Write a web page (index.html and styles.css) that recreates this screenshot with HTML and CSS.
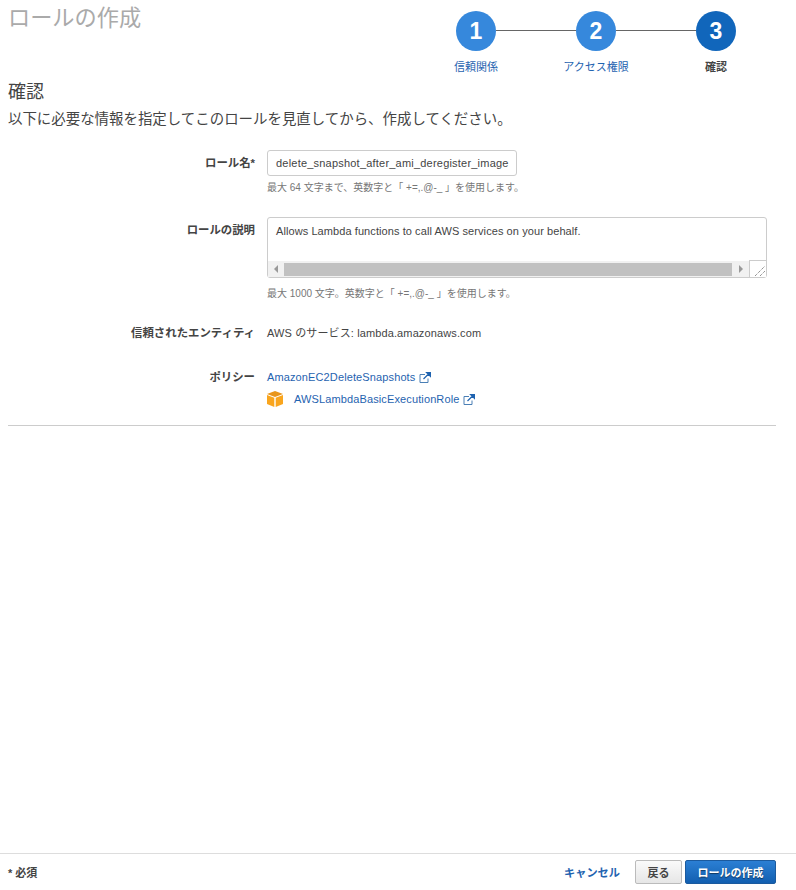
FILE: index.html
```html
<!DOCTYPE html>
<html lang="ja">
  <head>
    <meta charset="UTF-8" />
    <meta name="viewport" content="width=device-width, initial-scale=1.0" />
    <title>ロールの作成</title>
    <link rel="stylesheet" href="styles.css">
  </head>
  <body>
    <div class="page">
      <div class="top">
        <h1 class="title">ロールの作成</h1>
        <!-- ステップ -->
        <div class="steps">
          <div class="step">
            <div class="circle">1</div>
            <a class="step-label">信頼関係</a>
          </div>
          <div class="step">
            <div class="circle">2</div>
            <a class="step-label">アクセス権限</a>
          </div>
          <div class="step current">
            <div class="circle">3</div>
            <span class="step-label">確認</span>
          </div>
        </div>
      </div>

      <h2 class="heading">確認</h2>
      <p class="lead">以下に必要な情報を指定してこのロールを見直してから、作成してください。</p>

      <div class="form">
        <div class="row row-name">
          <div class="label">ロール名*</div>
          <div class="value">
            <div class="input">delete_snapshot_after_ami_deregister_image</div>
            <p class="hint">最大 64 文字まで、英数字と「 +=,.@-_ 」を使用します。</p>
          </div>
        </div>

        <div class="row row-desc">
          <div class="label">ロールの説明</div>
          <div class="value">
            <div class="textarea">
              <div class="textarea-text">Allows Lambda functions to call AWS services on your behalf.</div>
              <div class="scrollbar">
                <span class="arrow arrow-left"></span>
                <span class="thumb"></span>
                <span class="arrow arrow-right"></span>
                <span class="resizer">
                  <svg width="12" height="12" viewBox="0 0 12 12">
                    <path d="M1 11 L11 1 M6 11 L11 6" stroke="#666" stroke-width="1" stroke-dasharray="1 1" fill="none" />
                  </svg>
                </span>
              </div>
            </div>
            <p class="hint">最大 1000 文字。英数字と「 +=,.@-_ 」を使用します。</p>
          </div>
        </div>

        <div class="row row-entity">
          <div class="label">信頼されたエンティティ</div>
          <div class="value">AWS のサービス: lambda.amazonaws.com</div>
        </div>

        <div class="row row-policy">
          <div class="label">ポリシー</div>
          <div class="value">
            <div class="policy">
              <a class="link">AmazonEC2DeleteSnapshots</a>
              <svg class="ext" width="12" height="11" viewBox="0 0 12 11">
                <path d="M6 2.5 H1 V10.5 H9 V6.5" stroke="#4a7fb5" stroke-width="1" fill="none" />
                <path d="M4.5 7 L9.5 2 M7.5 0.5 H11.5 V4.5 Z" stroke="#1f63b0" stroke-width="1.2" fill="#1f63b0" />
              </svg>
            </div>
            <div class="policy policy-aws">
              <svg class="cube" width="16" height="16" viewBox="0 0 16 16">
                <path d="M8 0 L16 3 L8 6 L0 3 Z" fill="#e8951a" />
                <path d="M0 4 L7.3 6.8 V16 L0 13 Z" fill="#f9a51e" />
                <path d="M16 4 L8.7 6.8 V16 L16 13 Z" fill="#f9a51e" />
              </svg>
              <a class="link">AWSLambdaBasicExecutionRole</a>
              <svg class="ext" width="12" height="11" viewBox="0 0 12 11">
                <path d="M6 2.5 H1 V10.5 H9 V6.5" stroke="#4a7fb5" stroke-width="1" fill="none" />
                <path d="M4.5 7 L9.5 2 M7.5 0.5 H11.5 V4.5 Z" stroke="#1f63b0" stroke-width="1.2" fill="#1f63b0" />
              </svg>
            </div>
          </div>
        </div>
      </div>
      <hr class="divider" />
    </div>

    <div class="footer">
      <span class="required">* 必須</span>
      <div class="actions">
        <a class="cancel">キャンセル</a>
        <button class="btn btn-back">戻る</button>
        <button class="btn btn-primary">ロールの作成</button>
      </div>
    </div>
  </body>
</html>
```

FILE: styles.css
```css
* {
  box-sizing: border-box;
}

body {
  margin: 0;
  height: 890px;
  display: flex;
  flex-direction: column;
  background-color: #fff;
  color: #444;
  font-family: "Liberation Sans", Arial, "Noto Sans CJK JP", sans-serif;
  font-size: 11px;
  overflow: hidden;
}

.page {
  flex: 1;
  padding: 0 20px 0 8px;
}

.top {
  display: flex;
  height: 76px;
}

.title {
  width: 416px;
  margin: 4px 0 0;
  color: #aaa;
  font-size: 22.2px;
  line-height: 29px;
  font-weight: normal;
}

.steps {
  display: flex;
  padding-top: 11px;
}

.step {
  width: 120px;
  display: flex;
  flex-direction: column;
  align-items: center;
  position: relative;
}

.step:not(:last-child)::after {
  content: "";
  position: absolute;
  top: 19px;
  left: 80px;
  width: 80px;
  height: 1px;
  background-color: #666;
}

.circle {
  width: 40px;
  height: 40px;
  border-radius: 50%;
  background-color: #3688dc;
  color: #fff;
  font-size: 23px;
  font-weight: bold;
  line-height: 40px;
  text-align: center;
}

.step-label {
  margin-top: 8px;
  color: #1f63b0;
  font-size: 11px;
  line-height: 16px;
}

.current .circle {
  background-color: #1166bb;
}

.current .step-label {
  color: #444;
  font-weight: bold;
}

.heading {
  margin: 5px 0 0;
  color: #444;
  font-size: 18px;
  line-height: 22px;
  font-weight: normal;
}

.lead {
  margin: 6px 0 0;
  color: #444;
  font-size: 14.45px;
  line-height: 20px;
}

.form {
  margin-top: 21px;
}

.row {
  display: flex;
  align-items: flex-start;
}

.label {
  width: 247px;
  margin-right: 12px;
  color: #444;
  font-size: 11.4px;
  font-weight: bold;
  text-align: right;
  line-height: 16px;
}

.row-name .label {
  padding-top: 5px;
}

.row-desc {
  margin-top: 22px;
}

.row-desc .label {
  padding-top: 5px;
}

.row-entity {
  margin-top: 24px;
  line-height: 16px;
}

.row-policy {
  margin-top: 28px;
}

.value {
  flex: 1;
}

.input {
  width: 250px;
  height: 26px;
  padding-left: 8px;
  border: 1px solid #ccc;
  border-radius: 3px;
  color: #444;
  letter-spacing: 0.21px;
  line-height: 24px;
}

.hint {
  margin: 4px 0 0;
  color: #777;
  font-size: 10px;
  line-height: 15px;
}

.row-desc .hint {
  margin-top: 8px;
}

.textarea {
  width: 500px;
  height: 61px;
  border: 1px solid #ccc;
  border-radius: 3px;
  display: flex;
  flex-direction: column;
}

.textarea-text {
  flex: 1;
  padding: 5px 8px;
  color: #444;
  letter-spacing: 0.08px;
  line-height: 16px;
}

.scrollbar {
  height: 16px;
  display: flex;
  align-items: center;
  background-color: #f1f1f1;
}

.arrow {
  width: 16px;
  flex: none;
  display: flex;
  justify-content: center;
}

.arrow::before {
  content: "";
  border-top: 4px solid transparent;
  border-bottom: 4px solid transparent;
}

.arrow-left::before {
  border-right: 4px solid #999;
}

.arrow-right {
  width: 17px;
}

.arrow-right::before {
  border-left: 4px solid #999;
}

.thumb {
  flex: 1;
  height: 13px;
  background-color: #c1c1c1;
}

.resizer {
  width: 17px;
  height: 17px;
  flex: none;
  margin-top: -1px;
  border-top: 1px solid #ccc;
  border-left: 1px solid #ccc;
  background-color: #fff;
  display: flex;
  align-items: flex-end;
  justify-content: flex-end;
}

.row-entity .value {
  color: #444;
  letter-spacing: 0.12px;
}

.policy {
  display: flex;
  align-items: center;
  height: 16px;
}

.policy-aws {
  margin-top: 6px;
}

.link {
  color: #1f63b0;
  letter-spacing: 0.12px;
}

.ext {
  margin-left: 4px;
}

.cube {
  margin-right: 11px;
}

.divider {
  margin: 18px 0 0;
  border: none;
  border-top: 1px solid #ccc;
}

.footer {
  height: 37px;
  flex: none;
  padding: 0 20px 0 8px;
  border-top: 1px solid #ddd;
  display: flex;
  align-items: center;
  justify-content: space-between;
}

.required {
  color: #444;
  font-weight: bold;
}

.actions {
  display: flex;
  align-items: center;
}

.cancel {
  margin-right: 15px;
  color: #1f63b0;
  font-size: 11.2px;
  font-weight: bold;
}

.btn {
  height: 24px;
  padding: 0;
  border: 1px solid #bbb;
  border-radius: 2px;
  background: linear-gradient(#fafafa, #e6e6e6);
  color: #444;
  font-family: inherit;
  font-size: 11px;
  font-weight: bold;
}

.btn-back {
  width: 47px;
}

.btn-primary {
  width: 91px;
  margin-left: 3px;
  border-color: #1b5a9e;
  background: linear-gradient(#2b7fd4, #125fb0);
  color: #fff;
  text-shadow: 0 1px 1px rgba(0, 0, 0, 0.5);
}
```
